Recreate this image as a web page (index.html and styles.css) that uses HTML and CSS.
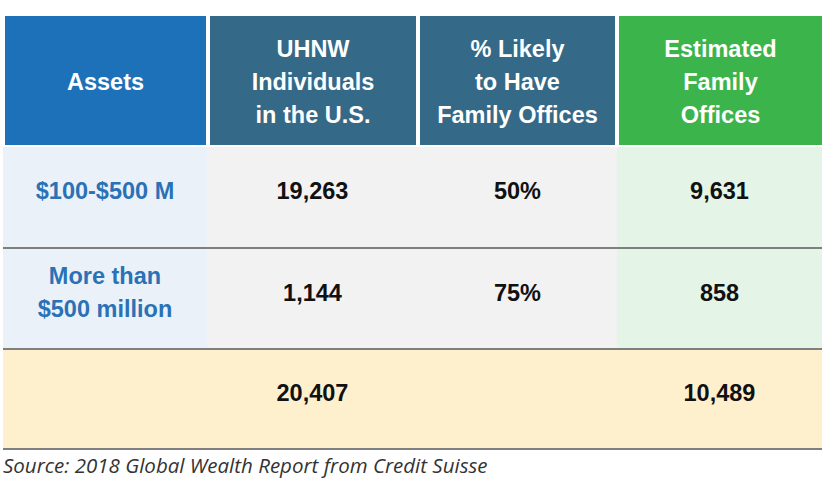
FILE: index.html
```html
<!DOCTYPE html>
<html lang="en">
<head>
<meta charset="utf-8">
<title>Family Offices</title>
<link rel="stylesheet" href="styles.css">
</head>
<body>
<div class="page">
  <div class="head">
    <div class="hcell h-assets">Assets</div>
    <div class="hcell h-steel">UHNW<br>Individuals<br>in the U.S.</div>
    <div class="hcell h-steel">% Likely<br>to Have<br>Family Offices</div>
    <div class="hcell h-green">Estimated<br>Family<br>Offices</div>
  </div>
  <div class="row r1">
    <div class="cell c-blue">$100-$500 M</div>
    <div class="cell c-gray">19,263</div>
    <div class="cell c-gray">50%</div>
    <div class="cell c-green">9,631</div>
  </div>
  <div class="row r2">
    <div class="cell c-blue">More than<br>$500 million</div>
    <div class="cell c-gray">1,144</div>
    <div class="cell c-gray">75%</div>
    <div class="cell c-green">858</div>
  </div>
  <div class="row r3 total">
    <div class="cell"></div>
    <div class="cell">20,407</div>
    <div class="cell"></div>
    <div class="cell">10,489</div>
  </div>
  <p class="source">Source: 2018 Global Wealth Report from Credit Suisse</p>
</div>
</body>
</html>
```
FILE: styles.css
```css
html, body {
  margin: 0;
  padding: 0;
  background: #ffffff;
}
.page {
  width: 819px;
  margin: 16px 0 0 3px;
  font-family: "Liberation Sans", Arial, sans-serif;
  font-weight: bold;
  font-size: 23.5px;
}
.head {
  display: grid;
  grid-template-columns: 201px 206px 195px 203px;
  column-gap: 4px;
  margin-left: 2px;
  height: 129px;
  margin-bottom: 2px;
}
.hcell {
  display: flex;
  align-items: center;
  justify-content: center;
  text-align: center;
  color: #ffffff;
  line-height: 33px;
  padding-top: 3px;
}
.h-assets { background: #1d71b8; }
.h-steel { background: #346987; }
.h-green { background: #3bb44b; }
.row {
  display: grid;
  grid-template-columns: 204px 211px 199px 205px;
  border-bottom: 2px solid #7f7f7f;
}
.r1 { height: 100px; }
.r2 { height: 99px; }
.r3 { height: 98px; }
.cell {
  display: flex;
  align-items: center;
  justify-content: center;
  text-align: center;
  color: #111111;
  line-height: 33px;
  padding-bottom: 11px;
}
.c-blue { background: #eaf1f9; color: #2a72b5; }
.c-gray { background: #f2f2f2; }
.c-green { background: #e4f5e7; }
.total { background: #fff0cd; }
.source {
  margin: 2px 0 0 0;
  font-family: "Open Sans", sans-serif;
  font-style: italic;
  font-weight: normal;
  font-size: 20.5px;
  line-height: 26px;
  color: #333333;
}
```
